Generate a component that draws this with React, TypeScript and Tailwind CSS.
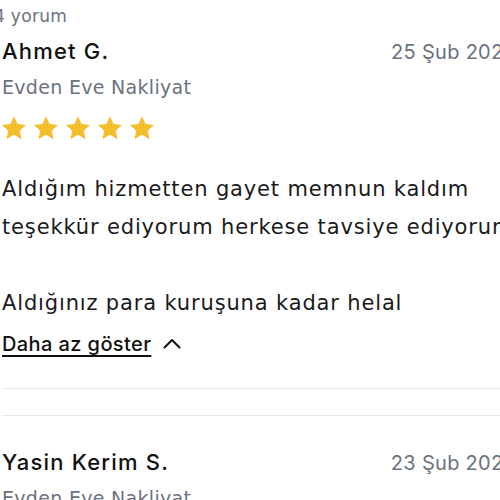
import React from 'react';

const body = { fontFamily: '"DejaVu Sans", "Noto Sans", sans-serif' };

function Stars() {
  return (
    <div className="flex gap-[6px] -ml-[1px]">
      {[0, 1, 2, 3, 4].map((i) => (
        <svg key={i} width="26" height="26" viewBox="0 0 24 24">
          <path
            d="M12 1.2l3.3 7.2 7.9.8-5.9 5.3 1.7 7.8L12 18.2l-7 4.1 1.7-7.8L.8 9.2l7.9-.8z"
            fill="#f6bd2c"
          />
        </svg>
      ))}
    </div>
  );
}

type Review = {
  name: string;
  date: string;
  service: string;
};

function Header({ review }: { review: Review }) {
  return (
    <div>
      <div className="flex items-baseline justify-between">
        <span className="text-[22px] font-medium text-[#111] leading-[30px] tracking-[1.2px]">{review.name}</span>
        <span className="text-[20px] text-[#6b7280] leading-[30px] whitespace-nowrap tracking-[0.3px]">{review.date}</span>
      </div>
      <div className="mt-[7px] text-[19px] text-[#6b7280] leading-[26px] tracking-[0.3px]" style={body}>
        {review.service}
      </div>
    </div>
  );
}

export default function App() {
  return (
    <div className="w-[500px] h-[500px] overflow-hidden bg-white" style={{ fontFamily: 'Inter, "Noto Sans", sans-serif' }}>
      <div className="w-[516px] pl-[2px]">
        <div className="-ml-[8px] text-[17px] text-[#6b7280] leading-[22px] pt-[5px] tracking-[0.3px]" style={body}>
          4 yorum
        </div>
        <div className="mt-[9px]">
          <Header review={{ name: 'Ahmet G.', date: '25 Şub 2025', service: 'Evden Eve Nakliyat' }} />
        </div>
        <div className="mt-[15px]">
          <Stars />
        </div>
        <div className="mt-[29px] text-[21px] leading-[38px] text-[#1a1a1a] whitespace-nowrap tracking-[0.85px]" style={body}>
          <p>Aldığım hizmetten gayet memnun kaldım</p>
          <p>teşekkür ediyorum herkese tavsiye ediyorum</p>
          <p>&nbsp;</p>
          <p>Aldığınız para kuruşuna kadar helal</p>
        </div>
        <button className="mt-[8px] flex items-center gap-[11px] text-[20px] font-medium text-[#111] leading-[28px] tracking-[0.4px]">
          <span className="underline underline-offset-[4px] decoration-[1.5px]">Daha az göster</span>
          <svg width="20" height="20" viewBox="0 0 20 20" fill="none" stroke="#111" strokeWidth="2" strokeLinecap="round" strokeLinejoin="round">
            <path d="M2.5 13.5l7.5-7.5 7.5 7.5" />
          </svg>
        </button>
        <div className="mt-[30px] border-t border-[#e5e7eb]" />
        <div className="mt-[26px] border-t border-[#e5e7eb]" />
        <div className="mt-[31px]">
          <Header review={{ name: 'Yasin Kerim S.', date: '23 Şub 2025', service: 'Evden Eve Nakliyat' }} />
        </div>
      </div>
    </div>
  );
}
